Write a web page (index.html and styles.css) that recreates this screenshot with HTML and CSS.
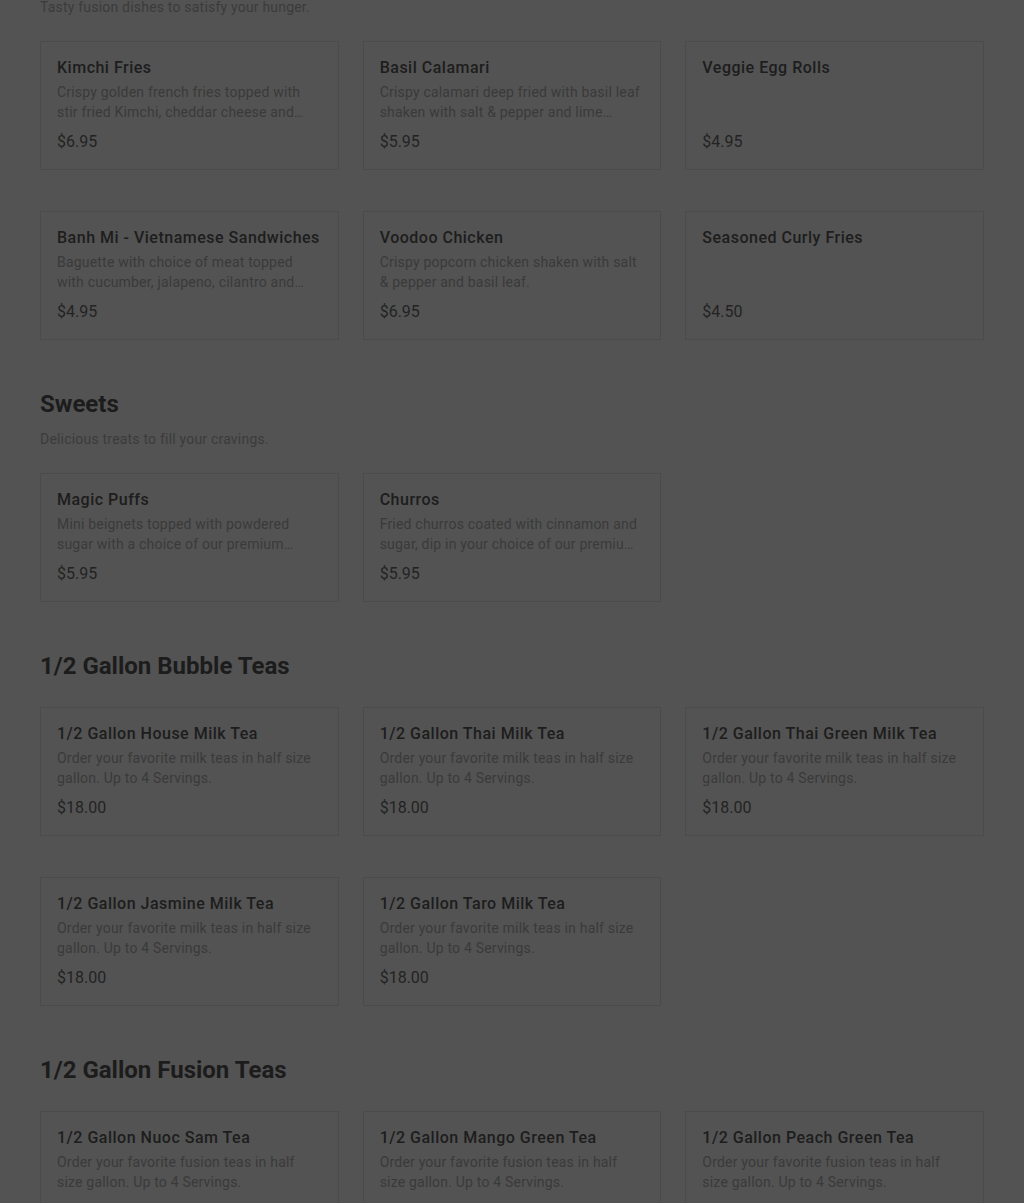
FILE: index.html
```html
<!DOCTYPE html>
<html lang="en">
<head>
<meta charset="utf-8">
<title>Menu</title>
<link rel="stylesheet" href="styles.css">
</head>
<body>
<main class="menu">
  <section class="section">
    <p class="section-sub section-sub--first">Tasty fusion dishes to satisfy your hunger.</p>
    <div class="grid">
      <div class="card"><h3 class="card-title">Kimchi Fries</h3><p class="card-desc">Crispy golden french fries topped with stir fried Kimchi, cheddar cheese and green onions served with our house sauce.</p><div class="card-price">$6.95</div></div>
      <div class="card"><h3 class="card-title">Basil Calamari</h3><p class="card-desc">Crispy calamari deep fried with basil leaf shaken with salt &amp; pepper and lime squeeze on top.</p><div class="card-price">$5.95</div></div>
      <div class="card"><h3 class="card-title">Veggie Egg Rolls</h3><p class="card-desc"></p><div class="card-price">$4.95</div></div>
      <div class="card"><h3 class="card-title">Banh Mi - Vietnamese Sandwiches</h3><p class="card-desc">Baguette with choice of meat topped with cucumber, jalapeno, cilantro and pickled carrots and daikon.</p><div class="card-price">$4.95</div></div>
      <div class="card"><h3 class="card-title">Voodoo Chicken</h3><p class="card-desc">Crispy popcorn chicken shaken with salt &amp; pepper and basil leaf.</p><div class="card-price">$6.95</div></div>
      <div class="card"><h3 class="card-title">Seasoned Curly Fries</h3><p class="card-desc"></p><div class="card-price">$4.50</div></div>
    </div>
  </section>

  <section class="section">
    <h2 class="section-title">Sweets</h2>
    <p class="section-sub">Delicious treats to fill your cravings.</p>
    <div class="grid">
      <div class="card"><h3 class="card-title">Magic Puffs</h3><p class="card-desc">Mini beignets topped with powdered sugar with a choice of our premium dipping sauces.</p><div class="card-price">$5.95</div></div>
      <div class="card"><h3 class="card-title">Churros</h3><p class="card-desc">Fried churros coated with cinnamon and sugar, dip in your choice of our premium sauces.</p><div class="card-price">$5.95</div></div>
    </div>
  </section>

  <section class="section">
    <h2 class="section-title section-title--nosub">1/2 Gallon Bubble Teas</h2>
    <div class="grid">
      <div class="card"><h3 class="card-title">1/2 Gallon House Milk Tea</h3><p class="card-desc">Order your favorite milk teas in half size gallon. Up to 4 Servings.</p><div class="card-price">$18.00</div></div>
      <div class="card"><h3 class="card-title">1/2 Gallon Thai Milk Tea</h3><p class="card-desc">Order your favorite milk teas in half size gallon. Up to 4 Servings.</p><div class="card-price">$18.00</div></div>
      <div class="card"><h3 class="card-title">1/2 Gallon Thai Green Milk Tea</h3><p class="card-desc">Order your favorite milk teas in half size gallon. Up to 4 Servings.</p><div class="card-price">$18.00</div></div>
      <div class="card"><h3 class="card-title">1/2 Gallon Jasmine Milk Tea</h3><p class="card-desc">Order your favorite milk teas in half size gallon. Up to 4 Servings.</p><div class="card-price">$18.00</div></div>
      <div class="card"><h3 class="card-title">1/2 Gallon Taro Milk Tea</h3><p class="card-desc">Order your favorite milk teas in half size gallon. Up to 4 Servings.</p><div class="card-price">$18.00</div></div>
    </div>
  </section>

  <section class="section">
    <h2 class="section-title section-title--nosub">1/2 Gallon Fusion Teas</h2>
    <div class="grid">
      <div class="card"><h3 class="card-title">1/2 Gallon Nuoc Sam Tea</h3><p class="card-desc">Order your favorite fusion teas in half size gallon. Up to 4 Servings.</p><div class="card-price">$18.00</div></div>
      <div class="card"><h3 class="card-title">1/2 Gallon Mango Green Tea</h3><p class="card-desc">Order your favorite fusion teas in half size gallon. Up to 4 Servings.</p><div class="card-price">$18.00</div></div>
      <div class="card"><h3 class="card-title">1/2 Gallon Peach Green Tea</h3><p class="card-desc">Order your favorite fusion teas in half size gallon. Up to 4 Servings.</p><div class="card-price">$18.00</div></div>
    </div>
  </section>
</main>
</body>
</html>
```

FILE: styles.css
```css
html, body {
  margin: 0;
  padding: 0;
  background: #535353;
}
body {
  font-family: Roboto, "Liberation Sans", sans-serif;
  color: #1d1d1d;
  overflow: hidden;
  height: 1203px;
}
.menu {
  padding: 0 40px;
  margin-top: -3px;
}
.section {
  padding-bottom: 8px;
}
.section-title {
  margin: 0;
  font-size: 24px;
  line-height: 32px;
  font-weight: 700;
  letter-spacing: 0;
  color: #1c1c1c;
}
.section-title--nosub {
  margin-bottom: 25px;
}
.section-sub {
  margin: 9px 0 24px;
  font-size: 14px;
  line-height: 20px;
  letter-spacing: 0.2px;
  color: #3b3b3b;
}
.section-sub--first {
  margin-top: 0;
}
.grid {
  display: grid;
  grid-template-columns: repeat(3, 1fr);
  column-gap: 24px;
  row-gap: 41px;
  padding-bottom: 40px;
}
.card {
  border: 1px solid #4b4b4b;
  padding: 16px 16px 17px;
  display: flex;
  flex-direction: column;
  min-width: 0;
}
.card-title {
  margin: 0;
  font-size: 16px;
  line-height: 20px;
  font-weight: 500;
  letter-spacing: 0.5px;
  color: #1d1d1d;
  white-space: nowrap;
}
.card-desc {
  margin: 4px 0 0;
  font-size: 14px;
  line-height: 20px;
  height: 40px;
  letter-spacing: 0.2px;
  color: #3a3a3a;
  display: -webkit-box;
  -webkit-line-clamp: 2;
  -webkit-box-orient: vertical;
  overflow: hidden;
}
.card-price {
  margin-top: 10px;
  font-size: 16px;
  line-height: 20px;
  color: #232323;
}
```
